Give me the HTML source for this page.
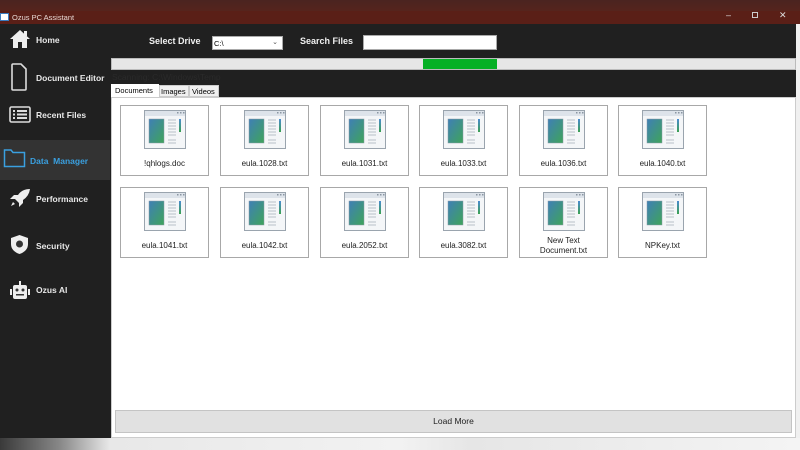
<!DOCTYPE html>
<html><head><style>
*{margin:0;padding:0;box-sizing:border-box}
body{width:800px;height:450px;overflow:hidden;background:#f0f0f0;font-family:"Liberation Sans",sans-serif;position:relative}
.abs{position:absolute}
.nav{position:absolute;left:36px;color:#e8e8e8;font-size:8.5px;font-weight:bold}
.card{position:absolute;width:89px;height:71px;border:1px solid #a8a8a8;background:#fff;text-align:center;font-size:8px;color:#222}
.card svg{position:absolute;left:22px;top:3px}
.card span{position:absolute;left:0;right:0;top:53px;line-height:10px}
.card span.two{top:48px}
</style></head><body>
<svg width="0" height="0" style="position:absolute"><defs>
<linearGradient id="g" x1="0" y1="0" x2="1" y2="1"><stop offset="0" stop-color="#3f7fb6"/><stop offset="1" stop-color="#3fa45a"/></linearGradient>
<linearGradient id="b" x1="0" y1="0" x2="0" y2="1"><stop offset="0" stop-color="#4a8ad0"/><stop offset="1" stop-color="#3aa050"/></linearGradient>
<symbol id="doc" viewBox="0 0 44 42"><rect x="1.5" y="1.5" width="41" height="38" fill="#f4f6f8" stroke="#9aa4ae"/><rect x="2" y="2" width="40" height="5" fill="#dde3ea"/><rect x="34" y="3" width="1.5" height="1.5" fill="#8a96a2"/><rect x="37" y="3" width="1.5" height="1.5" fill="#8a96a2"/><rect x="40" y="3" width="1.5" height="1.5" fill="#8a96a2"/><rect x="6" y="10" width="15" height="24" fill="url(#g)" stroke="#8a9aa8" stroke-width=".5"/><g stroke="#b8c0c8" stroke-width="1"><line x1="25" y1="11" x2="33" y2="11"/><line x1="25" y1="14" x2="33" y2="14"/><line x1="25" y1="17" x2="33" y2="17"/><line x1="25" y1="20" x2="33" y2="20"/><line x1="25" y1="23" x2="33" y2="23"/><line x1="25" y1="26" x2="33" y2="26"/><line x1="25" y1="31" x2="33" y2="31"/><line x1="25" y1="34" x2="33" y2="34"/></g><rect x="36" y="10" width="2" height="13" fill="url(#b)"/></symbol>
</defs></svg>
<div class="abs" style="left:0;top:0;width:800px;height:11px;background:linear-gradient(#4a2420,#55241d)"></div>
<div class="abs" style="left:0;top:11px;width:800px;height:13px;background:#5a1f17"></div>
<div class="abs" style="left:0;top:13px;width:9px;height:8px;background:#fff;border:1px solid #3a7cc0"></div>
<div class="abs" style="left:12px;top:13px;color:#e8d8d4;font-size:7.5px">Ozus PC Assistant</div>
<div class="abs" style="left:726px;top:10px;color:#ddd;font-size:9px">–</div>
<div class="abs" style="left:752px;top:12px;width:6px;height:6px;border:1.5px solid #ccc"></div>
<div class="abs" style="left:779px;top:10px;color:#ddd;font-size:9px">✕</div>
<div class="abs" style="left:0;top:24px;width:796px;height:414px;background:#202020"></div>
<div class="abs" style="left:0;top:140px;width:110px;height:40px;background:#333"></div>
<!-- icons -->
<svg class="abs" style="left:9px;top:29px" width="22" height="20" viewBox="0 0 22 20"><path d="M11 1 L1 10 H4 V19 H9 V13 H13 V19 H18 V10 H21 Z" fill="#eee"/><rect x="15" y="2" width="3" height="5" fill="#eee"/></svg>
<div class="nav" style="top:35px">Home</div>
<svg class="abs" style="left:11px;top:63px" width="16" height="28" viewBox="0 0 16 28"><path d="M2 1 H10 L15 6 V26 Q15 27 14 27 H2 Q1 27 1 26 V2 Q1 1 2 1 Z" fill="none" stroke="#ddd" stroke-width="1.6"/></svg>
<div class="nav" style="top:73px">Document Editor</div>
<svg class="abs" style="left:9px;top:106px" width="22" height="17" viewBox="0 0 22 17"><rect x="1" y="1" width="20" height="15" rx="1.5" fill="none" stroke="#ddd" stroke-width="1.6"/><g fill="#ddd"><rect x="4" y="4" width="2" height="2"/><rect x="4" y="7.5" width="2" height="2"/><rect x="4" y="11" width="2" height="2"/><rect x="8" y="4" width="10" height="2"/><rect x="8" y="7.5" width="10" height="2"/><rect x="8" y="11" width="10" height="2"/></g></svg>
<div class="nav" style="top:110px">Recent Files</div>
<svg class="abs" style="left:3px;top:148px" width="23" height="20" viewBox="0 0 23 20"><path d="M1.5 2 H8 L10 4.5 H21.5 V18.5 H1.5 Z" fill="none" stroke="#3aa0e0" stroke-width="1.5"/></svg>
<div class="nav" style="top:156px;left:30px;color:#3aa0e0">Data &nbsp;Manager</div>
<svg class="abs" style="left:9px;top:188px" width="22" height="20" viewBox="0 0 22 20"><path d="M21 1 Q13 1 9 7 L5 7 L1 11 L6 11 L10 15 L10 19 L14 15 L14 12 Q20 8 21 1 Z" fill="#eee"/><path d="M4 14 L2 18 L6 16" fill="#eee"/></svg>
<div class="nav" style="top:194px">Performance</div>
<svg class="abs" style="left:10px;top:234px" width="19" height="21" viewBox="0 0 19 21"><path d="M9.5 1 L18 4 V10 Q18 17 9.5 20 Q1 17 1 10 V4 Z" fill="#eee"/><circle cx="9.5" cy="10" r="3.5" fill="#333"/></svg>
<div class="nav" style="top:241px">Security</div>
<svg class="abs" style="left:9px;top:280px" width="22" height="20" viewBox="0 0 22 20"><rect x="10" y="1" width="2" height="4" fill="#eee"/><rect x="4" y="5" width="14" height="14" rx="2" fill="#eee"/><rect x="1" y="9" width="2" height="6" fill="#eee"/><rect x="19" y="9" width="2" height="6" fill="#eee"/><circle cx="8" cy="10" r="1.5" fill="#333"/><circle cx="14" cy="10" r="1.5" fill="#333"/><rect x="7" y="14" width="8" height="1.5" fill="#333"/></svg>
<div class="nav" style="top:285px">Ozus AI</div>
<!-- top bar -->
<div class="abs" style="left:149px;top:36px;color:#f0f0f0;font-size:9px;font-weight:bold">Select Drive</div>
<div class="abs" style="left:212px;top:36px;width:71px;height:14px;background:#fff;border:1px solid #aaa;font-size:7.5px;padding:2px 1px">C:\<span style="position:absolute;right:4px;top:1px;font-size:7px;color:#555">⌄</span></div>
<div class="abs" style="left:300px;top:36px;color:#f0f0f0;font-size:9px;font-weight:bold">Search Files</div>
<div class="abs" style="left:363px;top:35px;width:134px;height:15px;background:#fff;border:1px solid #aaa"></div>
<div class="abs" style="left:111px;top:58px;width:685px;height:12px;background:#e6e6e6;border:1px solid #bbb"></div>
<div class="abs" style="left:423px;top:59px;width:74px;height:10px;background:#06b025"></div>
<div class="abs" style="left:112px;top:72px;color:#2a2a2a;font-size:8.5px">Scanning: C:\Windows\Temp</div>
<div class="abs" style="left:111px;top:84px;width:48px;height:14px;background:#fff;font-size:7.5px;padding:2px 4px">Documents</div>
<div class="abs" style="left:159px;top:85px;width:30px;height:12px;background:#f0f0f0;border:1px solid #ccc;font-size:7.5px;padding:1px 1px">Images</div>
<div class="abs" style="left:189px;top:85px;width:30px;height:12px;background:#f0f0f0;border:1px solid #ccc;font-size:7.5px;padding:1px 2px">Videos</div>
<div class="abs" style="left:111px;top:97px;width:685px;height:341px;background:#fff;border:1px solid #ccc"></div>
<!-- cards -->
<div class="card" style="left:120px;top:105px"><svg width="44" height="42"><use href="#doc"/></svg><span>!qhlogs.doc</span></div>
<div class="card" style="left:220px;top:105px"><svg width="44" height="42"><use href="#doc"/></svg><span>eula.1028.txt</span></div>
<div class="card" style="left:320px;top:105px"><svg width="44" height="42"><use href="#doc"/></svg><span>eula.1031.txt</span></div>
<div class="card" style="left:419px;top:105px"><svg width="44" height="42"><use href="#doc"/></svg><span>eula.1033.txt</span></div>
<div class="card" style="left:519px;top:105px"><svg width="44" height="42"><use href="#doc"/></svg><span>eula.1036.txt</span></div>
<div class="card" style="left:618px;top:105px"><svg width="44" height="42"><use href="#doc"/></svg><span>eula.1040.txt</span></div>
<div class="card" style="left:120px;top:187px"><svg width="44" height="42"><use href="#doc"/></svg><span>eula.1041.txt</span></div>
<div class="card" style="left:220px;top:187px"><svg width="44" height="42"><use href="#doc"/></svg><span>eula.1042.txt</span></div>
<div class="card" style="left:320px;top:187px"><svg width="44" height="42"><use href="#doc"/></svg><span>eula.2052.txt</span></div>
<div class="card" style="left:419px;top:187px"><svg width="44" height="42"><use href="#doc"/></svg><span>eula.3082.txt</span></div>
<div class="card" style="left:519px;top:187px"><svg width="44" height="42"><use href="#doc"/></svg><span class="two">New Text<br>Document.txt</span></div>
<div class="card" style="left:618px;top:187px"><svg width="44" height="42"><use href="#doc"/></svg><span>NPKey.txt</span></div>
<div class="abs" style="left:115px;top:410px;width:677px;height:23px;background:#e1e1e1;border:1px solid #c4c4c4;font-size:8.5px;text-align:center;line-height:21px;color:#222">Load More</div>
<div class="abs" style="left:0;top:438px;width:800px;height:12px;background:linear-gradient(90deg,#3a3a3a 0,#888 60px,#e8e8e8 110px,#f2f2f2 400px,#e6e6e6 470px,#f4f4f4 800px)"></div>
</body></html>
